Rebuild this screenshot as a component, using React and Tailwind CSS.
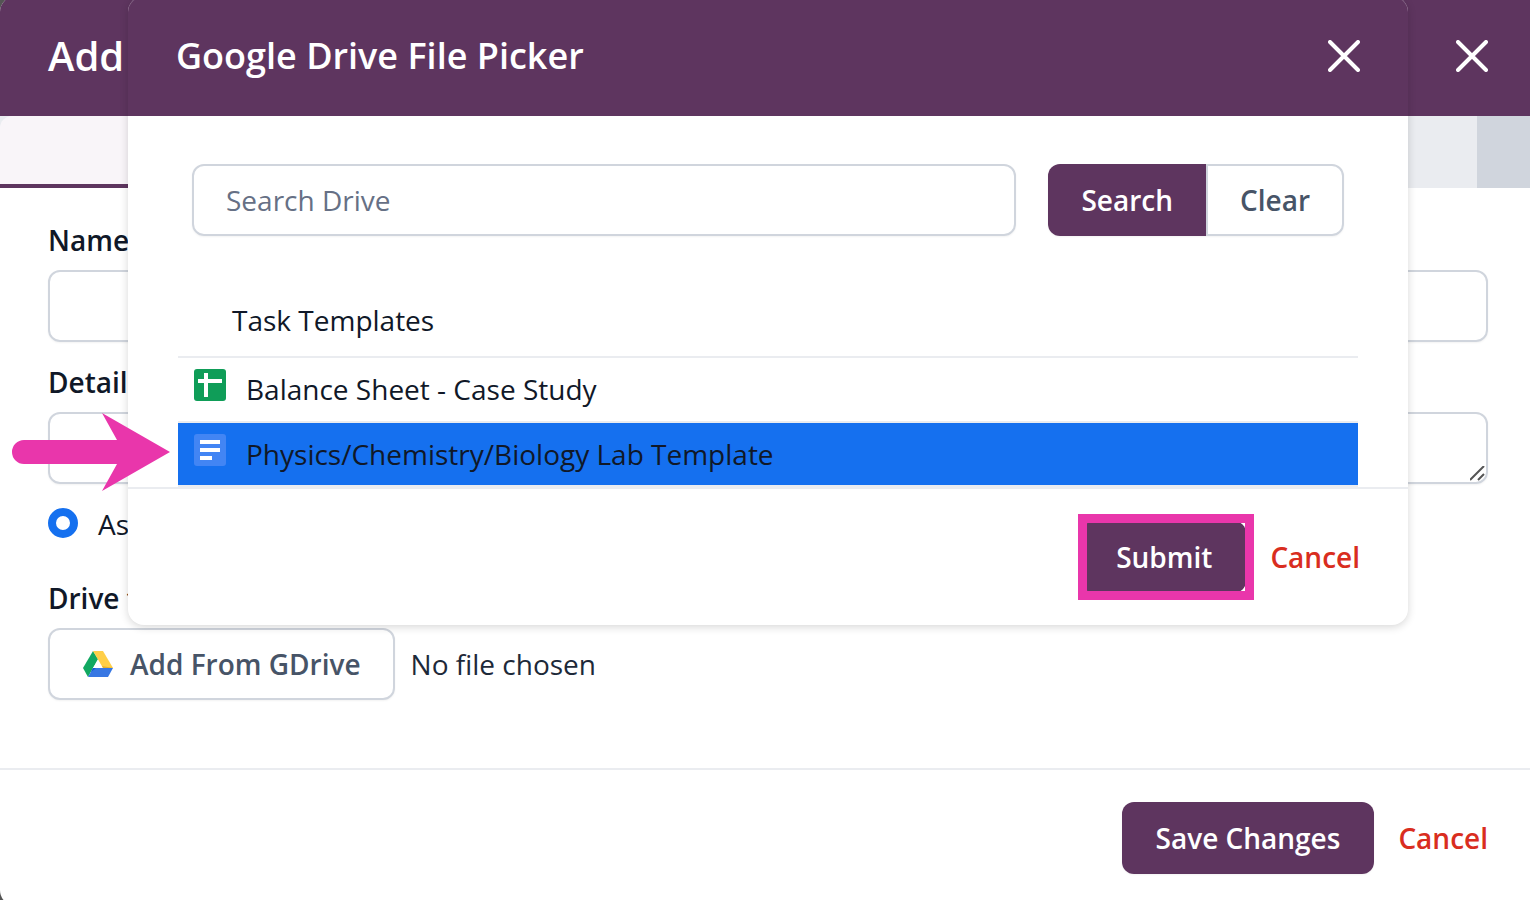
import React, { useState } from 'react';

const files = [
  { id: 'balance', name: 'Balance Sheet - Case Study', type: 'sheet' },
  { id: 'lab', name: 'Physics/Chemistry/Biology Lab Template', type: 'doc' },
];

function CloseButton() {
  return (
    <button type="button" aria-label="Close" className="shrink-0 text-white">
      <svg className="h-8 w-8" viewBox="0 0 32 32" fill="none" stroke="currentColor" strokeWidth="4" strokeLinecap="round">
        <path d="M2 2L30 30M30 2L2 30" />
      </svg>
    </button>
  );
}

function SheetIcon() {
  return (
    <svg className="h-8 w-8 shrink-0" viewBox="0 0 32 32">
      <rect width="32" height="32" rx="3" fill="#0f9d58" />
      <path d="M4 12h24M12 4v24" stroke="#fff" strokeWidth="4" />
    </svg>
  );
}

function DocIcon() {
  return (
    <svg className="h-8 w-8 shrink-0" viewBox="0 0 32 32">
      <rect width="32" height="32" rx="3" fill="#4285f4" />
      <path d="M6 8h20M6 16h20M6 24h12" stroke="#fff" strokeWidth="4" />
    </svg>
  );
}

function DriveIcon() {
  return (
    <svg className="h-8 w-8 shrink-0" viewBox="0 0 32 32">
      <path d="M11 3L16 11L6 29L1 20Z" fill="#11a861" />
      <path d="M11 3H21L31 20H21Z" fill="#ffcf48" />
      <path d="M21 20L20 18L31 20Z" fill="#e5b02f" />
      <path d="M11 20H31L26 29H6Z" fill="#3777e3" />
      <path d="M11 20H14L9 24Z" fill="#1259cf" />
      <path d="M11 20L16 12L20 20Z" fill="#fff" />
    </svg>
  );
}

function FilePicker() {
  const [selected, setSelected] = useState('lab');
  const [query, setQuery] = useState('');

  return (
    <section
      aria-label="Google Drive File Picker"
      className="absolute inset-x-32 top-0 rounded-2xl bg-white shadow-[0_2px_8px_rgba(0,0,0,0.16)]"
    >
      <header className="flex items-center justify-between rounded-t-2xl bg-[#5e355f] px-12 py-10 shadow-[inset_0_1px_0_#79577a]">
        <h2 className="text-[36px] leading-10 font-semibold text-white">Google Drive File Picker</h2>
        <CloseButton />
      </header>

      <form className="flex gap-8 px-16 pt-12" onSubmit={(e) => e.preventDefault()}>
        <input
          type="text"
          aria-label="Search Drive"
          placeholder="Search Drive"
          value={query}
          onChange={(e) => setQuery(e.target.value)}
          className="h-18 min-w-0 flex-1 rounded-xl border-2 border-[#d0d5dd] px-8 text-[28px] font-medium shadow-xs placeholder:text-[#667085]"
        />
        <div className="flex rounded-xl shadow-xs">
          <button type="submit" className="h-18 rounded-l-xl bg-[#5e355f] px-[33px] font-semibold text-white">
            Search
          </button>
          <button
            type="button"
            onClick={() => setQuery('')}
            className="h-18 rounded-r-xl border-2 border-[#d0d5dd] px-8 font-semibold text-[#475467]"
          >
            Clear
          </button>
        </div>
      </form>

      <div className="px-[50px] pt-16">
        <h3 className="border-b-2 border-[#eaecf0] pb-4 pl-[54px]">Task Templates</h3>
        <ul>
          {files.map((file) => (
            <li key={file.id} className="border-b-2 border-[#eaecf0]">
              <button
                type="button"
                onClick={() => setSelected(file.id)}
                className={
                  'flex w-full items-start gap-5 px-4 pt-[11px] text-left ' +
                  (selected === file.id ? 'bg-[#1570ef] pb-[11px]' : 'bg-white pb-3')
                }
              >
                {file.type === 'sheet' ? <SheetIcon /> : <DocIcon />}
                <span>{file.name}</span>
              </button>
            </li>
          ))}
        </ul>
      </div>

      <footer className="flex items-center justify-end gap-6 border-t-2 border-[#eaecf0] px-12 py-8">
        <div className="relative">
          <button type="button" className="h-18 rounded-xl bg-[#5e355f] px-[34px] font-semibold text-white">
            Submit
          </button>
          <div className="pointer-events-none absolute -inset-x-1 -inset-y-[7px] -right-2 border-[9px] border-[#e936ab]" />
        </div>
        <button type="button" className="font-semibold text-[#d92d20]">Cancel</button>
      </footer>
    </section>
  );
}

export default function App() {
  return (
    <div className="h-screen overflow-hidden bg-[#545454] font-['Open_Sans','Noto_Sans',sans-serif] text-[28px] leading-10 text-[#101828]">
      <main className="relative -mt-1 -mr-1.5 rounded-2xl bg-white">
        <header className="flex items-center justify-between rounded-t-2xl bg-[#5e355f] px-12 py-10">
          <h1 className="text-[40px] leading-10 font-semibold text-white">Add</h1>
          <CloseButton />
        </header>

        <div className="flex h-18 bg-[#eaecf0]">
          <div className="flex-1 rounded-tl-xl border-b-4 border-[#5e355f] bg-[#f9f5f9]" />
          <div className="flex-1" />
          <div className="w-[59px] bg-[#d0d5dd]" />
        </div>

        <div className="px-12 pt-8">
          <label htmlFor="name" className="block font-semibold">Name</label>
          <input
            id="name"
            type="text"
            className="mt-2.5 block h-18 w-full rounded-xl border-2 border-[#d0d5dd] px-8 shadow-xs"
          />

          <label htmlFor="details" className="mt-5 block font-semibold">Detail</label>
          <div className="relative mt-2.5">
            <textarea
              id="details"
              rows={1}
              className="block h-18 w-full resize-none rounded-xl border-2 border-[#d0d5dd] px-8 py-3 shadow-xs"
            />
            <svg className="pointer-events-none absolute right-0.5 bottom-0.5 h-4 w-4" viewBox="0 0 16 16" stroke="#555" strokeWidth="2">
              <path d="M0 14L14 0M8 14L14 8" />
            </svg>
          </div>

          <div className="mt-5 flex gap-5">
            <input
              id="as"
              type="radio"
              defaultChecked
              className="mt-1 h-[30px] w-[30px] appearance-none rounded-full border-8 border-[#1570ef] bg-white"
            />
            <label htmlFor="as">As</label>
          </div>

          <label htmlFor="drive" className="mt-[34px] block font-semibold">Drive f</label>
          <div className="mt-2.5 flex items-center gap-4">
            <button
              id="drive"
              type="button"
              className="flex h-18 items-center gap-4 rounded-xl border-2 border-[#d0d5dd] bg-white px-8 font-semibold text-[#475467] shadow-xs"
            >
              <DriveIcon />
              Add From GDrive
            </button>
            <span className="text-[#1d2939]">No file chosen</span>
          </div>
        </div>

        <footer className="mt-17 flex items-center justify-end gap-6 border-t-2 border-[#eaecf0] px-12 py-8">
          <button type="button" className="h-18 rounded-xl bg-[#5e355f] px-[34px] font-semibold text-white shadow-xs">
            Save Changes
          </button>
          <button type="button" className="font-semibold text-[#d92d20]">Cancel</button>
        </footer>

        <FilePicker />

        {/* callout arrow pointing at the selected file */}
        <svg className="pointer-events-none absolute top-[416px] left-3 h-20 w-40" viewBox="0 0 160 80" fill="#e936ab">
          <path d="M12 28H105L90 1L158 40L90 79L105 52H12A12 12 0 0 1 12 28Z" />
        </svg>
      </main>
    </div>
  );
}
